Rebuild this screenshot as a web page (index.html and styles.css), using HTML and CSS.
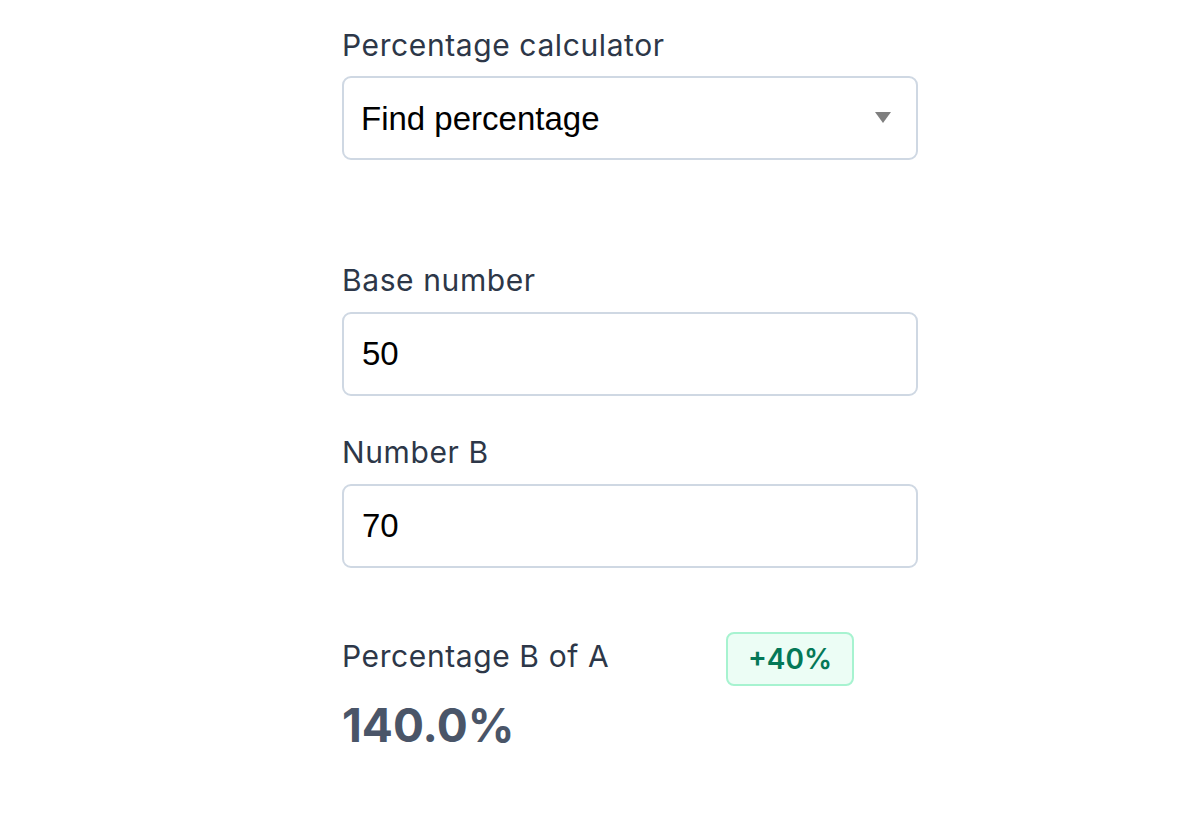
FILE: index.html
```html
<!DOCTYPE html>
<html lang="en">
<head>
<meta charset="utf-8">
<title>Percentage calculator</title>
<link rel="stylesheet" href="styles.css">
</head>
<body>
<main class="calc">
  <div class="field field-mode">
    <label class="label" for="mode">Percentage calculator</label>
    <div class="select-wrap">
      <select id="mode" class="control select">
        <option>Find percentage</option>
      </select>
      <svg class="caret" width="16" height="11" viewBox="0 0 16 11" aria-hidden="true"><path d="M0 0H16L8 11Z" fill="#7f7f7f"/></svg>
    </div>
  </div>

  <div class="field field-base">
    <label class="label" for="base">Base number</label>
    <input id="base" class="control" type="text" value="50">
  </div>

  <div class="field field-b">
    <label class="label" for="numb">Number B</label>
    <input id="numb" class="control" type="text" value="70">
  </div>

  <section class="result">
    <div class="result-head">
      <span class="label result-label">Percentage B of A</span>
      <span class="badge">+40%</span>
    </div>
    <div class="result-value">140.0%</div>
  </section>
</main>
</body>
</html>
```

FILE: styles.css
```css
html, body {
  margin: 0;
  padding: 0;
  background: #ffffff;
}

body {
  font-family: Inter, "Noto Sans", sans-serif;
}

.calc {
  width: 576px;
  margin-left: 342px;
  padding-top: 24px;
}

.field {
  display: flex;
  flex-direction: column;
}

.label {
  display: block;
  font-family: Inter, "Noto Sans", sans-serif;
  font-size: 30px;
  line-height: 42px;
  letter-spacing: 0.6px;
  font-weight: 400;
  color: #2d3748;
  margin-bottom: 11px;
}

.field-mode .label {
  margin-bottom: 10px;
}

.field-base {
  margin-top: 99px;
}

.field-b {
  margin-top: 35px;
}

.control {
  box-sizing: border-box;
  width: 576px;
  height: 84px;
  flex: 0 0 84px;
  margin: 0;
  padding: 0 18px;
  border: 2px solid #cfd8e3;
  border-radius: 9px;
  background: #ffffff;
  font-family: "Liberation Sans", Arial, sans-serif;
  font-size: 33px;
  color: #000000;
  outline: none;
}

.select-wrap {
  position: relative;
}

.select {
  -webkit-appearance: none;
  appearance: none;
  display: block;
  padding-left: 17px;
}

.caret {
  position: absolute;
  right: 27px;
  top: 36px;
  pointer-events: none;
}

.result {
  margin-top: 64px;
}

.result-head {
  display: flex;
  align-items: flex-start;
  justify-content: space-between;
  width: 512px;
}

.result-label {
  margin: 3px 0 0 0;
}

.badge {
  box-sizing: border-box;
  display: inline-flex;
  align-items: center;
  justify-content: center;
  width: 128px;
  height: 54px;
  padding: 0;
  border: 2px solid #a7f3d0;
  border-radius: 8px;
  background: #ecfdf5;
  color: #047857;
  font-size: 28px;
  font-weight: 600;
}

.result-value {
  margin-top: 11px;
  font-size: 46px;
  line-height: 56px;
  font-weight: 700;
  color: #4a5568;
}
```
